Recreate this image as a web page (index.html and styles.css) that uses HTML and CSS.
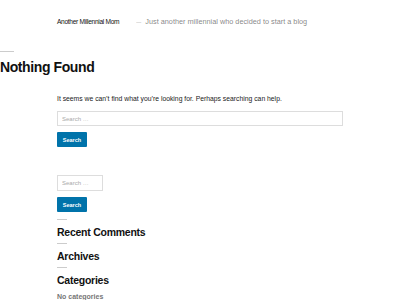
FILE: index.html
```html
<!DOCTYPE html>
<html lang="en">
<head>
<meta charset="UTF-8" />
<meta name="viewport" content="width=device-width, initial-scale=1" />
<title>Nothing Found – Another Millennial Mom</title>
<link rel="stylesheet" href="styles.css">
</head>
<body>

<header class="site-header">
  <span class="site-title">Another Millennial Mom</span>
  <span class="site-dash">—</span>
  <span class="site-description">Just another millennial who decided to start a blog</span>
</header>

<main class="site-main">
  <div class="page-header">
    <div class="rule rule-wide"></div>
    <h1 class="page-title">Nothing Found</h1>
  </div>

  <div class="page-content">
    <p>It seems we can’t find what you’re looking for. Perhaps searching can help.</p>
    <form class="search-form">
      <input type="search" class="search-field" placeholder="Search …">
      <button type="submit" class="search-submit">Search</button>
    </form>
  </div>
</main>

<aside class="widget-area">
  <form class="search-form search-form-small">
    <input type="search" class="search-field" placeholder="Search …">
    <button type="submit" class="search-submit">Search</button>
  </form>

  <section class="widget">
    <div class="rule"></div>
    <h2 class="widget-title">Recent Comments</h2>
  </section>
  <section class="widget">
    <div class="rule"></div>
    <h2 class="widget-title">Archives</h2>
  </section>
  <section class="widget">
    <div class="rule"></div>
    <h2 class="widget-title">Categories</h2>
    <ul class="widget-list">
      <li>No categories</li>
    </ul>
  </section>
</aside>

</body>
</html>
```

FILE: styles.css
```css
body {
  margin: 0;
  background: #fff;
  color: #111;
  font-family: "Liberation Sans", Arial, sans-serif;
  overflow: hidden;
}

/* header */
.site-header {
  display: flex;
  align-items: baseline;
  padding: 17px 57px 0;
  line-height: 10px;
  white-space: nowrap;
}
.site-title {
  font-size: 6.6px;
  letter-spacing: -0.3px;
  color: #111;
}
.site-dash {
  font-size: 5px;
  color: rgba(0, 0, 0, 0.4);
  margin: 0 4px 0 17px;
}
.site-description {
  font-size: 7.3px;
  color: rgba(0, 0, 0, 0.5);
}

/* page */
.rule {
  width: 10px;
  height: 1px;
  background: #ccc;
}
.rule-wide {
  width: 14px;
}
.page-header {
  margin-top: 24px;
}
.page-title {
  margin: 6px 0 0;
  font-size: 14px;
  line-height: 18px;
  letter-spacing: -0.4px;
  font-weight: bold;
}
.page-content {
  padding: 0 57px;
}
.page-content p {
  margin: 18px 0 0;
  font-size: 6.8px;
  line-height: 10px;
  color: #222;
}

/* search */
.search-form {
  display: flex;
  flex-direction: column;
  align-items: flex-start;
  gap: 6px;
  margin-top: 7px;
}
.search-field {
  box-sizing: border-box;
  width: 100%;
  height: 15px;
  margin: 0;
  padding: 0 4px;
  border: 1px solid #ddd;
  border-radius: 0;
  font-family: inherit;
  font-size: 6px;
  color: #333;
  outline: none;
}
.search-field::placeholder {
  color: #aaa;
}
.search-submit {
  width: 30px;
  height: 15px;
  padding: 0;
  border: none;
  border-radius: 1px;
  background: #0073aa;
  color: #fff;
  font-family: inherit;
  font-size: 5.5px;
  font-weight: bold;
}

/* widgets */
.widget-area {
  padding: 0 57px;
}
.search-form-small {
  margin-top: 28px;
}
.search-form-small .search-field {
  width: 46px;
  height: 16px;
}
.widget {
  padding-top: 7px;
}
.widget + .widget {
  padding-top: 4px;
}
.widget-title {
  margin: 5px 0 0;
  font-size: 10.5px;
  line-height: 14px;
  letter-spacing: -0.25px;
  font-weight: bold;
}
.widget-list {
  list-style: none;
  margin: 5px 0 0;
  padding: 0;
  font-size: 7px;
  line-height: 10px;
  font-weight: bold;
  color: #767676;
}
```
